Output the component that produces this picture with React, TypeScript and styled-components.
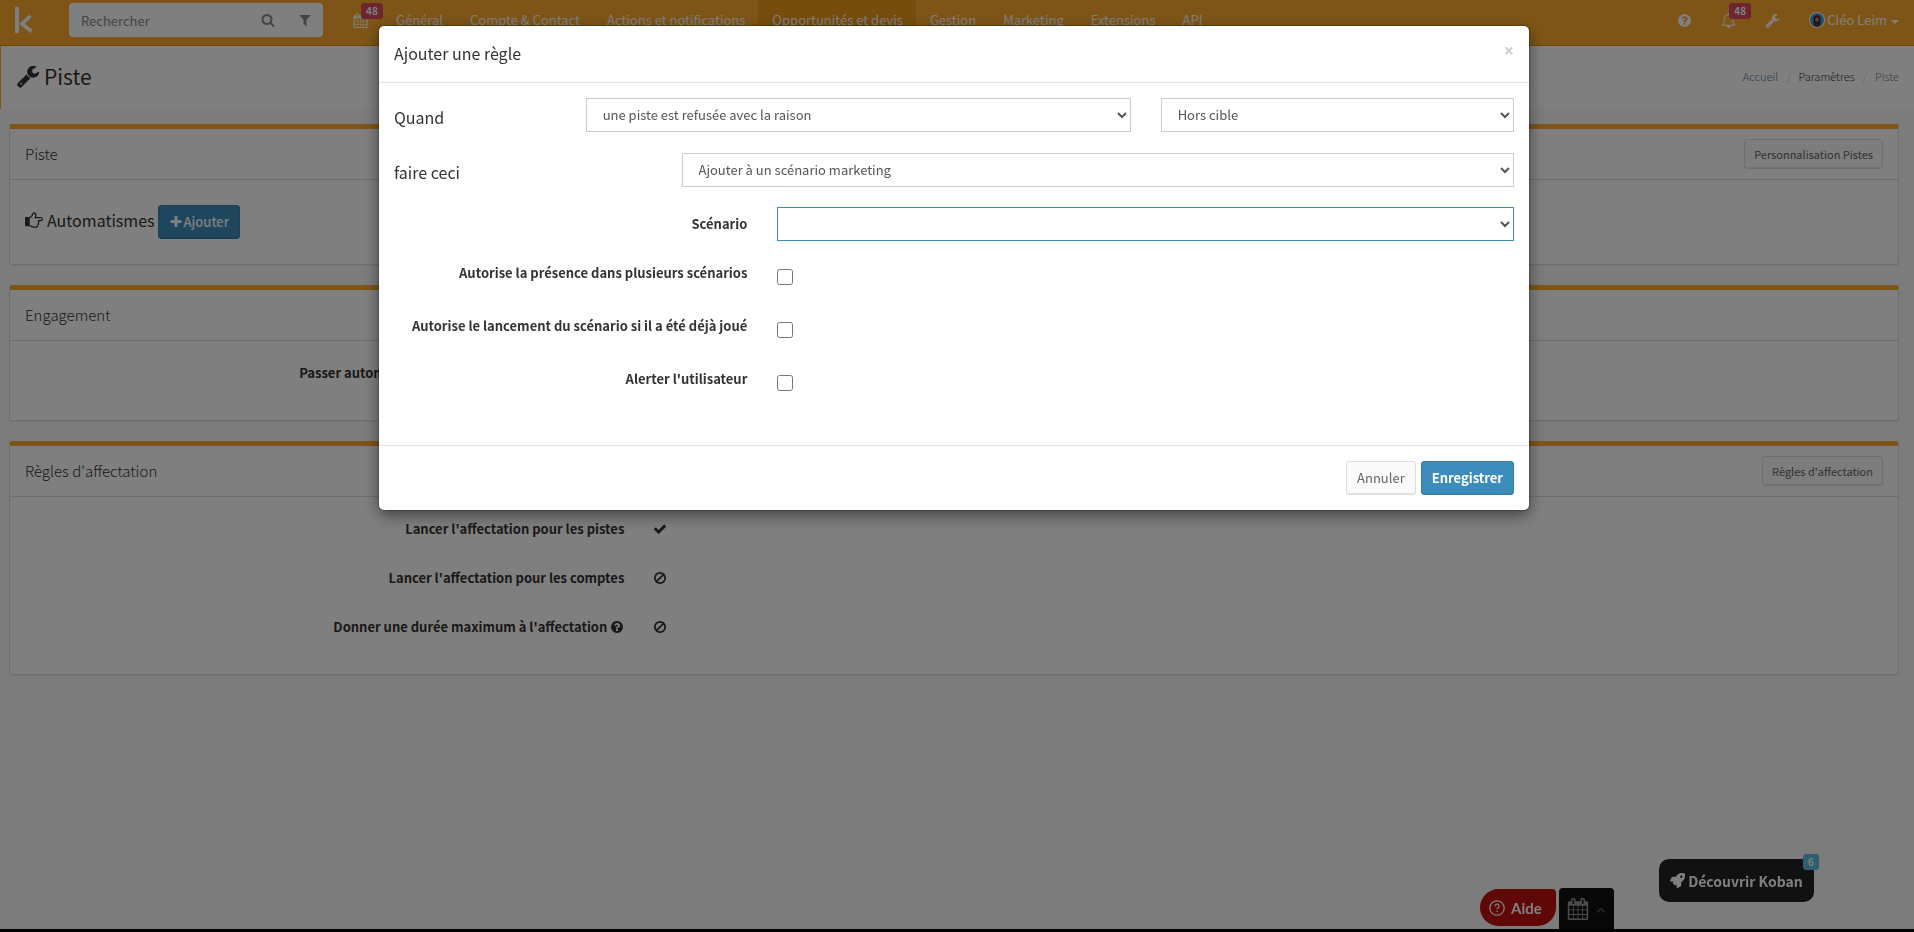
import React from "react";
import styled, { createGlobalStyle, css } from "styled-components";
import { FaRocket } from "react-icons/fa";

const ACCENT = "#fdab2f";
const BLUE = "#3c8dbc";

const GlobalStyle = createGlobalStyle`
  *, *::before, *::after { box-sizing: border-box; }
  body {
    margin: 0;
    font-family: "Noto Sans CJK SC", "Source Sans Pro", sans-serif;
    font-size: 13px;
    line-height: 20px;
    color: #333;
    background: #f9f9f9;
  }
  button, input, select { font: inherit; }
  a { text-decoration: none; }
  h1, h2, h3, p, ol { margin: 0; padding: 0; font-weight: 300; }
`;

/* ---------- icons (1792 unit grid) ---------- */

const paths = {
  calendar:
    "M192 1664h288v-288h-288v288zm352 0h320v-288h-320v288zm-352-352h288v-320h-288v320zm352 0h320v-320h-320v320zm-352-384h288v-288h-288v288zm736 736h320v-288h-320v288zm-384-736h320v-288h-320v288zm768 736h288v-288h-288v288zm-384-352h320v-320h-320v320zm-352-864v-288q0-13-9.5-22.5t-22.5-9.5h-64q-13 0-22.5 9.5t-9.5 22.5v288q0 13 9.5 22.5t22.5 9.5h64q13 0 22.5-9.5t9.5-22.5zm736 864h288v-320h-288v320zm-384-384h320v-288h-320v288zm384 0h288v-288h-288v288zm32-480v-288q0-13-9.5-22.5t-22.5-9.5h-64q-13 0-22.5 9.5t-9.5 22.5v288q0 13 9.5 22.5t22.5 9.5h64q13 0 22.5-9.5t9.5-22.5zm384-64v1280q0 52-38 90t-90 38h-1408q-52 0-90-38t-38-90v-1280q0-52 38-90t90-38h128v-96q0-66 47-113t113-47h64q66 0 113 47t47 113v96h384v-96q0-66 47-113t113-47h64q66 0 113 47t47 113v96h128q52 0 90 38t38 90z",
  wrench:
    "M448 1472q0-26-19-45t-45-19-45 19-19 45 19 45 45 19 45-19 19-45zm644-420l-682 682q-37 37-90 37-52 0-91-37l-106-108q-38-36-38-90 0-53 38-91l681-681q39 98 114.5 173.5t173.5 114.5zm634-435q0 39-23 106-47 134-164.5 217.5t-258.5 83.5q-185 0-316.5-131.5t-131.5-316.5 131.5-316.5 316.5-131.5q58 0 121.5 16.5t107.5 46.5q16 11 16 28t-16 28l-293 169v224l193 107q5-3 79-48.5t135.5-81 70.5-35.5q15 0 23.5 10t8.5 25z",
  question:
    "M1024 1376v-192q0-14-9-23t-23-9h-192q-14 0-23 9t-9 23v192q0 14 9 23t23 9h192q14 0 23-9t9-23zm256-672q0-88-55.5-163t-138.5-116-170-41q-243 0-371 213-15 24 8 42l132 100q7 6 19 6 16 0 25-12 53-68 86-92 34-24 86-24 48 0 85.5 26t37.5 59q0 38-20 61t-68 45q-63 28-115.5 86.5t-52.5 125.5v36q0 14 9 23t23 9h192q14 0 23-9t9-23q0-19 21.5-49.5t54.5-49.5q32-18 49-28.5t46-35 44.5-48 28-60.5 12.5-81zm384 192q0 209-103 385.5t-279.5 279.5-385.5 103-385.5-103-279.5-279.5-103-385.5 103-385.5 279.5-279.5 385.5-103 385.5 103 279.5 279.5 103 385.5z",
  search:
    "M1216 832q0-185-131.5-316.5t-316.5-131.5-316.5 131.5-131.5 316.5 131.5 316.5 316.5 131.5 316.5-131.5 131.5-316.5zm512 832q0 52-38 90t-90 38q-54 0-90-38l-343-342q-179 124-399 124-143 0-273.5-55.5t-225-150-150-225-55.5-273.5 55.5-273.5 150-225 225-150 273.5-55.5 273.5 55.5 225 150 150 225 55.5 273.5q0 220-124 399l343 343q37 37 37 90z",
  filter:
    "M1595 295q17 41-14 70l-493 493v742q0 42-39 59-13 5-25 5-27 0-45-19l-256-256q-19-19-19-45v-486l-493-493q-31-29-14-70 17-39 59-39h1280q42 0 59 39z",
  plus: "M1600 736v192q0 40-28 68t-68 28h-416v416q0 40-28 68t-68 28h-192q-40 0-68-28t-28-68v-416h-416q-40 0-68-28t-28-68v-192q0-40 28-68t68-28h416v-416q0-40 28-68t68-28h192q40 0 68 28t28 68v416h416q40 0 68 28t28 68z",
  check:
    "M1671 566q0 40-28 68l-724 724-136 136q-28 28-68 28t-68-28l-136-136-362-362q-28-28-28-68t28-68l136-136q28-28 68-28t68 28l294 295 656-657q28-28 68-28t68 28l136 136q28 28 28 68z",
  ban: "M1440 893q0-161-87-295l-754 753q137 89 297 89 111 0 211.5-43.5t173.5-116.5 116-174.5 43-212.5zm-999 299l755-754q-135-91-300-91-148 0-273 73t-198 199-73 274q0 162 89 299zm1223-299q0 157-61 300t-163.5 246-245 164-298.5 61-298.5-61-245-164-163.5-246-61-300 61-299.5 163.5-245.5 245-164 298.5-61 298.5 61 245 164 163.5 245.5 61 299.5z",
  bell: "M912 1696q0-16-16-16-59 0-101.5-42.5t-42.5-101.5q0-16-16-16t-16 16q0 73 51.5 124.5t124.5 51.5q16 0 16-16zm-666-288h1300q-266-300-266-832 0-51-24-105t-69-103-121.5-80.5-169.5-31.5-169.5 31.5-121.5 80.5-69 103-24 105q0 532-266 832zm1482 0q0 52-38 90t-90 38h-448q0 106-75 181t-181 75-181-75-75-181h-448q-52 0-90-38t-38-90q50-42 91-88t85-119.5 74.5-158.5 50-206 19.5-260q0-152 117-282.5t307-158.5q-8-19-8-39 0-40 28-68t68-28 68 28 28 68q0 20-8 39 190 28 307 158.5t117 282.5q0 139 19.5 260t50 206 74.5 158.5 85 119.5 91 88z",
};

const Svg = styled.svg`
  display: block;
  flex: none;
`;

function Icon({ name, size = 16 }: { name: keyof typeof paths; size?: number }) {
  return (
    <Svg width={size} height={size} viewBox="0 0 1792 1792" fill="currentColor" aria-hidden="true">
      <path d={paths[name]} />
    </Svg>
  );
}

function HandIcon() {
  return (
    <Svg width="18" height="16" viewBox="0 0 18 16" fill="none" stroke="currentColor" strokeWidth="1.300" aria-hidden="true">
      <path d="M.7 5.700h3.400v8H.7z" fill="currentColor" />
      <path
        d="M4.300 13.600c1.500 0 2.400 1.600 4.500 1.600h1.700c1.600 0 2.500-1 2.300-2.300.7-.6.900-1.500.5-2.300.5-.6.600-1.200.3-1.900h2.300a1.500 1.500 0 0 0 0-3H10c.5-1 .9-1.700.9-2.700 0-1.300-.8-2-2-2-1.300 0-1.200 1.700-1.900 2.600C6.200 4.600 5.300 5.900 4.300 5.900"
        strokeLinejoin="round"
      />
    </Svg>
  );
}

/* ---------- page frame ---------- */

const Page = styled.div`
  min-height: 100vh;
  display: flex;
  flex-direction: column;
`;

const TopBar = styled.header`
  display: flex;
  align-items: flex-start;
  height: 46px;
  padding-right: 15px;
  background: ${ACCENT};
  border-bottom: 1px solid #dc8d0e;
  color: #fff;
`;

const Brand = styled.a`
  width: 69px;
  padding: 7px 0 0 15px;
`;

const SearchBox = styled.form`
  display: flex;
  align-items: center;
  width: 254px;
  height: 34px;
  margin: 3px 15px 0 0;
  background: #fff;
  border-radius: 4px;
  color: #888;
`;

const SearchInput = styled.input`
  flex: 1;
  min-width: 0;
  height: 34px;
  padding: 0 12px;
  border: 0;
  background: transparent;
  outline: none;
  &::placeholder {
    color: #888;
    opacity: 1;
  }
`;

const IconButton = styled.button`
  display: flex;
  align-items: center;
  justify-content: center;
  width: 37px;
  height: 34px;
  padding: 0;
  border: 0;
  background: transparent;
  color: inherit;
`;

const Nav = styled.nav`
  display: flex;
  flex: 1;
`;

const NavLink = styled.a<{ $active?: boolean }>`
  position: relative;
  display: flex;
  align-items: center;
  height: 45px;
  padding: 0 13px 5px 14px;
  color: #fff;
  white-space: nowrap;
  background: ${(p) => (p.$active ? "#ef9b1a" : "transparent")};
`;

const IconLink = styled(NavLink)`
  width: 44px;
  padding: 0 0 5px;
  justify-content: center;
`;

const Badge = styled.span<{ $color?: string }>`
  position: absolute;
  top: 3px;
  left: 23px;
  padding: 0 5px;
  border-radius: 3px;
  background: ${(p) => p.$color || "#dd4b5a"};
  color: #fff;
  font-size: 10px;
  font-weight: 700;
  line-height: 16px;
`;

const UserLink = styled(NavLink)`
  gap: 2px;
  padding: 0 0 5px;
  margin-left: 15px;
`;

const Caret = styled.span`
  margin: 3px 0 0 2px;
  border: 4px solid transparent;
  border-top-color: currentColor;
  border-bottom: 0;
`;

const TitleBar = styled.section`
  display: flex;
  align-items: center;
  justify-content: space-between;
  height: 63px;
  padding: 0 15px 3px;
  background: #fff;
  border-left: 1px solid ${ACCENT};
`;

const PageTitle = styled.h1`
  display: flex;
  align-items: center;
  gap: 4px;
  font-size: 21px;
  line-height: 26px;
  font-weight: 400;
`;

const Crumbs = styled.ol`
  display: flex;
  list-style: none;
  font-size: 11px;
  color: #777;
  li + li::before {
    content: "/";
    padding: 0 8px;
    color: #ccc;
  }
`;

const CrumbLink = styled.a<{ $strong?: boolean }>`
  color: ${(p) => (p.$strong ? "#333" : "#4a78a8")};
`;

const Content = styled.main`
  flex: 1;
  padding: 15px 15px 0 9px;
`;

const Footer = styled.footer`
  height: 3px;
  background: #000;
`;

/* ---------- boxes ---------- */

const Box = styled.section`
  margin-bottom: 20px;
  border: 1px solid #ddd;
  border-top: 5px solid ${ACCENT};
  border-radius: 3px;
  background: #fff;
  box-shadow: 0 1px 1px rgba(0, 0, 0, 0.05);
`;

const BoxHeader = styled.header`
  display: flex;
  align-items: center;
  justify-content: space-between;
  height: 51px;
  padding: 0 15px;
  border-bottom: 1px solid #ddd;
`;

const BoxTitle = styled.h2`
  font-size: 15px;
  font-weight: 300;
`;

const BoxBody = styled.div`
  padding: 15px 0;
`;

const AutomationBar = styled.div`
  display: flex;
  align-items: center;
  gap: 3px;
  padding: 10px 15px;
`;

const AutomationTitle = styled.h3`
  display: flex;
  align-items: center;
  gap: 4px;
  font-size: 16px;
  font-weight: 400;
  padding-bottom: 5px;
`;

const Button = styled.button<{ $primary?: boolean; $small?: boolean; $bold?: boolean }>`
  display: flex;
  align-items: center;
  gap: 1px;
  height: ${(p) => (p.$small ? 30 : 34)}px;
  padding: 0 ${(p) => (p.$small ? 9 : 10)}px;
  border: 1px solid #ddd;
  border-radius: 3px;
  background: #fafafa;
  color: #666;
  font-size: ${(p) => (p.$small ? 11 : 13)}px;
  box-shadow: inset 0 -1px 0 rgba(0, 0, 0, 0.09);
  ${(p) =>
    p.$primary &&
    css`
      background: ${BLUE};
      border-color: #367fa9;
      color: #fff;
      font-weight: ${p.$bold ? 700 : 500};
    `}
`;

const FactList = styled.dl`
  margin: 0;
`;

const Fact = styled.div`
  display: grid;
  grid-template-columns: repeat(12, 1fr);
  height: 34px;
  margin-bottom: 15px;
  align-items: center;
`;

const FactName = styled.dt`
  grid-column: span 4;
  display: flex;
  justify-content: flex-end;
  align-items: center;
  gap: 3px;
  padding: 0 15px;
  font-weight: 700;
  white-space: nowrap;
`;

const FactValue = styled.dd`
  grid-column: span 8;
  margin: 0;
  padding: 0 14px;
`;

/* ---------- floating widgets ---------- */

const Dock = styled.div`
  position: fixed;
  right: 95px;
  bottom: 3px;
  display: flex;
  align-items: flex-end;
`;

const HelpButton = styled.button`
  display: flex;
  align-items: center;
  gap: 6px;
  width: 76px;
  height: 37px;
  margin: 0 3px 3px 0;
  padding: 0 9px;
  border: 0;
  border-radius: 19px 4px 19px 19px;
  background: #c00e0e;
  color: #fff;
  font-family: Lato, sans-serif;
  font-size: 15px;
  font-weight: 700;
`;

const AgendaButton = styled.button`
  display: flex;
  align-items: center;
  gap: 7px;
  width: 55px;
  height: 41px;
  margin-right: 45px;
  padding: 0 8px;
  border: 0;
  border-radius: 4px 4px 0 0;
  background: #111;
  color: #999;
`;

const DiscoverButton = styled.button`
  position: relative;
  display: flex;
  align-items: center;
  justify-content: center;
  gap: 3px;
  width: 155px;
  height: 43px;
  margin: 0 5px 27px 0;
  padding: 0;
  border: 0;
  border-radius: 10px;
  background: #222;
  color: #fff;
  font-size: 14px;
  font-weight: 700;
  white-space: nowrap;
`;

const CornerBadge = styled(Badge)`
  top: -5px;
  left: auto;
  right: -5px;
`;

/* ---------- dialog ---------- */

const Backdrop = styled.div`
  position: fixed;
  inset: 0;
  display: flex;
  justify-content: center;
  align-items: flex-start;
  padding: 26px 6px 26px 0;
  background: rgba(0, 0, 0, 0.5);
`;

const Dialog = styled.div`
  width: 60%;
  min-width: 1150px;
  border-radius: 5px;
  background: #fff;
  box-shadow: 0 5px 15px rgba(0, 0, 0, 0.5), 0 0 0 1px rgba(0, 0, 0, 0.2);
`;

const DialogHeader = styled.header`
  display: flex;
  justify-content: space-between;
  align-items: flex-start;
  height: 57px;
  padding: 15px;
  border-bottom: 1px solid #e5e5e5;
`;

const DialogTitle = styled.h2`
  font-size: 16px;
  line-height: 24px;
  font-weight: 400;
`;

const CloseButton = styled.button`
  padding: 0;
  border: 0;
  background: transparent;
  color: #ccc;
  font-family: "Open Sans", sans-serif;
  font-size: 18px;
  font-weight: 700;
  line-height: 18px;
`;

const DialogBody = styled.form`
  min-height: 362px;
  padding: 15px 0;
`;

const FieldRow = styled.div<{ $gap?: number }>`
  display: grid;
  grid-template-columns: repeat(12, 1fr);
  margin-bottom: ${(p) => p.$gap || 15}px;
`;

const Cell = styled.div<{ $span: number }>`
  grid-column: span ${(p) => p.$span};
  padding: 0 15px;
`;

const LeadLabel = styled.label<{ $span: number }>`
  grid-column: span ${(p) => p.$span};
  padding: 7px 15px 0;
  font-size: 16px;
  line-height: 24px;
`;

const FieldLabel = styled.label`
  grid-column: span 4;
  padding: 7px 15px 0;
  text-align: right;
  font-weight: 700;
`;

const Select = styled.select<{ $focused?: boolean }>`
  display: block;
  width: 100%;
  height: 34px;
  padding: 5px 12px 7px;
  border: 1px solid ${(p) => (p.$focused ? BLUE : "#ccc")};
  border-radius: 0;
  background: #fff;
  color: #555;
  outline: none;
`;

const Tick = styled.input`
  display: block;
  width: 16px;
  height: 16px;
  margin: 13px 0 9px;
`;

const DialogFooter = styled.footer`
  display: flex;
  justify-content: flex-end;
  gap: 5px;
  padding: 15px;
  border-top: 1px solid #e5e5e5;
`;

const navItems = [
  "Général",
  "Compte & Contact",
  "Actions et notifications",
  "Opportunités et devis",
  "Gestion",
  "Marketing",
  "Extensions",
  "API",
];

const options = [
  { id: "multi", label: "Autorise la présence dans plusieurs scénarios" },
  { id: "replay", label: "Autorise le lancement du scénario si il a été déjà joué" },
  { id: "alert", label: "Alerter l'utilisateur" },
];

function Avatar() {
  return (
    <Svg width="16" height="16" viewBox="0 0 16 16" aria-hidden="true">
      <circle cx="8" cy="8" r="8" fill="#fff" />
      <circle cx="8" cy="8" r="7" fill="#3d9fdc" />
      <path d="M4.5 12.500V7a3.500 3.800 0 0 1 7 0v5.500z" fill="#3a2430" />
      <ellipse cx="8" cy="7.500" rx="1.800" ry="2.300" fill="#c9805f" />
      <path d="M4.500 13.800a3.500 3.300 0 0 1 7 0a7 7 0 0 1-7 0z" fill="#6a3038" />
    </Svg>
  );
}

export default function App() {
  return (
    <Page>
      <GlobalStyle />
      <TopBar>
        <Brand href="#" aria-label="Koban">
          <Svg width="19" height="26" viewBox="0 0 19 26" fill="none" stroke="#fff" strokeWidth="4">
            <path d="M2 0v26" />
            <path d="M15.500 9L7 17l9.500 7.500" strokeWidth="3.600" />
          </Svg>
        </Brand>
        <SearchBox>
          <SearchInput type="text" placeholder="Rechercher" aria-label="Rechercher" />
          <IconButton type="button" aria-label="Lancer la recherche">
            <Icon name="search" size={14} />
          </IconButton>
          <IconButton type="button" aria-label="Filtrer">
            <Icon name="filter" size={14} />
          </IconButton>
        </SearchBox>
        <Nav>
          <IconLink href="#" aria-label="Agenda">
            <Icon name="calendar" size={15} />
            <Badge>48</Badge>
          </IconLink>
          {navItems.map((item) => (
            <NavLink key={item} href="#" $active={item === "Opportunités et devis"}>
              {item}
            </NavLink>
          ))}
        </Nav>
        <IconLink href="#" aria-label="Aide en ligne">
          <Icon name="question" size={15} />
        </IconLink>
        <IconLink href="#" aria-label="Notifications">
          <Icon name="bell" size={15} />
          <Badge>48</Badge>
        </IconLink>
        <IconLink href="#" aria-label="Réglages">
          <Icon name="wrench" size={15} />
        </IconLink>
        <UserLink href="#">
          <Avatar />
          Cléo Leim
          <Caret />
        </UserLink>
      </TopBar>

      <TitleBar>
        <PageTitle>
          <Icon name="wrench" size={24} />
          Piste
        </PageTitle>
        <Crumbs>
          <li>
            <CrumbLink href="#">Accueil</CrumbLink>
          </li>
          <li>
            <CrumbLink href="#" $strong>
              Paramètres
            </CrumbLink>
          </li>
          <li>Piste</li>
        </Crumbs>
      </TitleBar>

      <Content>
        <Box>
          <BoxHeader>
            <BoxTitle>Piste</BoxTitle>
            <Button type="button" $small>
              Personnalisation Pistes
            </Button>
          </BoxHeader>
          <BoxBody>
            <AutomationBar>
              <AutomationTitle>
                <HandIcon />
                Automatismes
              </AutomationTitle>
              <Button type="button" $primary>
                <Icon name="plus" size={14} />
                Ajouter
              </Button>
            </AutomationBar>
          </BoxBody>
        </Box>

        <Box>
          <BoxHeader>
            <BoxTitle>Engagement</BoxTitle>
          </BoxHeader>
          <BoxBody>
            <FactList>
              <Fact>
                <FactName>Passer automatiquement les pistes en engagement</FactName>
                <FactValue>
                  <Icon name="ban" size={14} />
                </FactValue>
              </Fact>
            </FactList>
          </BoxBody>
        </Box>

        <Box>
          <BoxHeader>
            <BoxTitle>Règles d'affectation</BoxTitle>
            <Button type="button" $small>
              Règles d'affectation
            </Button>
          </BoxHeader>
          <BoxBody>
            <FactList>
              <Fact>
                <FactName>Lancer l'affectation pour les pistes</FactName>
                <FactValue>
                  <Icon name="check" size={14} />
                </FactValue>
              </Fact>
              <Fact>
                <FactName>Lancer l'affectation pour les comptes</FactName>
                <FactValue>
                  <Icon name="ban" size={14} />
                </FactValue>
              </Fact>
              <Fact>
                <FactName>
                  Donner une durée maximum à l'affectation
                  <Icon name="question" size={14} />
                </FactName>
                <FactValue>
                  <Icon name="ban" size={14} />
                </FactValue>
              </Fact>
            </FactList>
          </BoxBody>
        </Box>
      </Content>
      <Footer />

      <Dock>
        <HelpButton type="button">
          <Svg width="16" height="16" viewBox="0 0 16 16" fill="none" stroke="currentColor" strokeWidth="1.300">
            <circle cx="8" cy="8" r="7.200" />
            <path d="M6 6.300a2 2 0 1 1 2.900 1.700q-.9.500-.9 1.400" />
            <path d="M8 10.800v1.300" />
          </Svg>
          Aide
        </HelpButton>
        <AgendaButton type="button" aria-label="Ouvrir l'agenda">
          <Icon name="calendar" size={22} />
          <Svg width="10" height="10" viewBox="0 0 10 10" fill="none" stroke="currentColor">
            <path d="M1 8.500l4-4 4 4" />
          </Svg>
        </AgendaButton>
        <DiscoverButton type="button">
          <FaRocket size={15} />
          Découvrir Koban
          <CornerBadge $color="#5bc0de">6</CornerBadge>
        </DiscoverButton>
      </Dock>

      <Backdrop>
        <Dialog role="dialog" aria-modal="true" aria-labelledby="rule-title">
          <DialogHeader>
            <DialogTitle id="rule-title">Ajouter une règle</DialogTitle>
            <CloseButton type="button" aria-label="Fermer">
              ×
            </CloseButton>
          </DialogHeader>
          <DialogBody>
            <FieldRow $gap={21}>
              <LeadLabel $span={2} htmlFor="event">
                Quand
              </LeadLabel>
              <Cell $span={6}>
                <Select id="event">
                  <option>une piste est refusée avec la raison</option>
                </Select>
              </Cell>
              <Cell $span={4}>
                <Select aria-label="Raison">
                  <option>Hors cible</option>
                </Select>
              </Cell>
            </FieldRow>
            <FieldRow $gap={20}>
              <LeadLabel $span={3} htmlFor="action">
                faire ceci
              </LeadLabel>
              <Cell $span={9}>
                <Select id="action">
                  <option>Ajouter à un scénario marketing</option>
                </Select>
              </Cell>
            </FieldRow>
            <FieldRow>
              <FieldLabel htmlFor="scenario">Scénario</FieldLabel>
              <Cell $span={8}>
                <Select id="scenario" $focused>
                  <option></option>
                </Select>
              </Cell>
            </FieldRow>
            {options.map((o) => (
              <FieldRow key={o.id}>
                <FieldLabel htmlFor={o.id}>{o.label}</FieldLabel>
                <Cell $span={8}>
                  <Tick type="checkbox" id={o.id} />
                </Cell>
              </FieldRow>
            ))}
          </DialogBody>
          <DialogFooter>
            <Button type="button">Annuler</Button>
            <Button type="button" $primary $bold>
              Enregistrer
            </Button>
          </DialogFooter>
        </Dialog>
      </Backdrop>
    </Page>
  );
}
